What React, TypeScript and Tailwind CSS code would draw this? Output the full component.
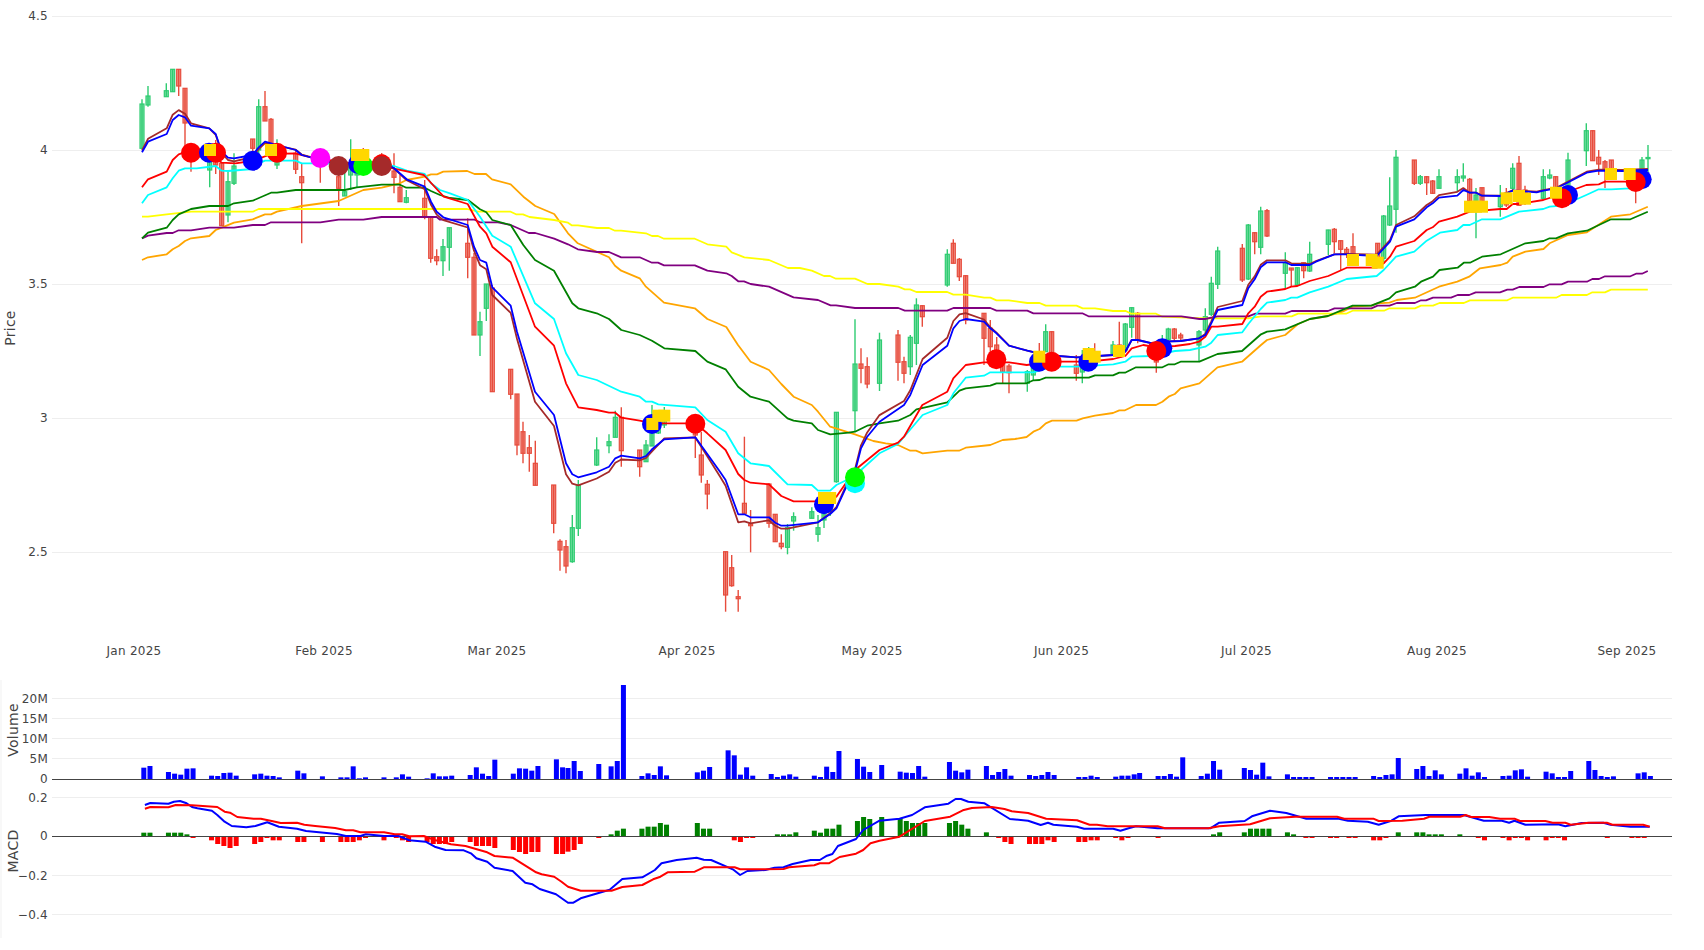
import React from 'react';

type Pt = [number, number];
// x, high, body top, body bottom, low, up(1)/down(0) - all in page pixels
type Candle = [number, number, number, number, number, number];
type Marker = [number, number, string];

const LEFT = 52;
const RIGHT = 1672;

const candles: Candle[] = [
  [142, 99.3, 104, 148.3, 149, 1], [148, 86, 96, 105, 106.7, 1], [166.3, 83.3, 90.7, 96.7, 96.7, 1], [172.7, 69, 69.3, 91.7, 92, 1],
  [178.7, 69, 69.3, 86, 96, 0], [185, 88, 88.3, 123, 150, 0], [191, 145, 150, 160, 171.7, 0], [209.7, 145, 150, 170, 187.3, 1],
  [215.7, 140, 150, 165, 174, 0], [221.7, 163, 163.3, 225.7, 226, 0], [228, 171.7, 181.7, 215, 222.3, 1], [234, 153.3, 166, 183.3, 185, 1],
  [252.7, 139, 139, 148.3, 160, 0], [258.7, 99.3, 106.7, 150, 155, 1], [265, 91, 106.7, 121, 121, 0], [271, 118, 119.3, 145, 150, 0],
  [277, 139.3, 150, 165, 169, 1], [295.7, 150, 153.3, 169.3, 174, 0], [301.7, 163, 176.7, 182.7, 243.3, 0], [320.3, 150, 150, 165, 182.7, 0],
  [338.7, 165, 176.7, 188.3, 206, 0], [344.7, 172, 191.7, 196, 196, 1], [350.7, 139.3, 166, 175, 190, 1], [357, 150, 160, 175, 187.3, 1],
  [363.3, 148, 150, 160, 165, 0], [381.7, 153, 155, 165, 170, 0], [394, 153.3, 171, 177.3, 193.3, 0], [400, 175, 187.3, 201.7, 201.7, 0],
  [406.3, 190, 197.7, 202.3, 203.3, 1], [424.7, 180, 198.3, 217.3, 219.3, 0], [430.7, 217, 217.3, 258.3, 262.7, 0], [436.7, 249.3, 256.7, 260.7, 265.3, 0],
  [443, 239, 246.7, 260.7, 276, 1], [449.3, 227.7, 227.7, 247.3, 270.7, 1], [467.7, 218.3, 243.3, 257.3, 278.3, 0], [474, 253, 257.3, 335, 335, 0],
  [480, 311.7, 321.7, 335, 356, 1], [486.3, 284, 284, 308.3, 321, 1], [492.3, 285, 288, 391.7, 392, 0], [510.7, 369, 369.3, 394.3, 399.3, 0],
  [517, 394, 394, 445, 455.3, 0], [523, 421.7, 431.7, 453.3, 463.3, 0], [529.3, 435, 447.7, 453.3, 471.7, 0], [535.3, 440.7, 463.3, 485.3, 485.3, 0],
  [553.7, 485, 485, 523.3, 533.3, 0], [560, 539.3, 541.3, 550, 570.7, 0], [566, 540, 546.7, 566, 573.3, 0], [572.3, 515, 527.7, 561.7, 562.7, 1],
  [578.3, 480, 485, 528.3, 536, 1], [596.7, 437.3, 450, 465, 466, 1], [609, 434.3, 441.7, 445.7, 453.3, 1], [615.3, 410.7, 417.3, 437.3, 437.3, 1],
  [621.3, 407.3, 417.3, 450.7, 466.7, 0], [639.7, 450, 450, 466.7, 476.7, 0], [646, 440, 445, 461.7, 461.7, 1], [652, 405, 430, 446, 446, 1],
  [658.3, 415, 423, 433, 434, 1], [664.3, 407, 420, 425, 428, 1], [695.3, 415, 420, 435, 458, 0], [701.3, 432, 455, 475, 482.7, 0],
  [707.3, 480, 484.3, 494, 509.3, 0], [725.6, 551.7, 551.7, 595, 611.7, 0], [731.7, 555, 567.7, 585.7, 586.7, 0], [738.2, 590, 596.7, 598.7, 611.7, 0],
  [744.4, 436.7, 503.3, 513.3, 514, 0], [750.6, 510, 524, 525.7, 552.3, 0], [769, 483, 484, 523.3, 527.7, 0], [775.2, 514, 514.3, 541.7, 542, 0],
  [781.3, 534.3, 543.3, 546.7, 549.3, 0], [787.5, 524, 527.7, 547.3, 554.3, 1], [793.6, 512.3, 516.7, 521, 530.7, 1], [811.8, 507.3, 511.7, 518.3, 518.3, 1],
  [818, 515, 527.7, 534.3, 541.7, 1], [824, 505, 510, 520, 528, 1], [830.2, 500, 505, 512, 516, 1], [836.4, 412, 412.3, 481.7, 482.7, 1],
  [855, 319.3, 364, 410.7, 431.7, 1], [861, 348.3, 364, 368.3, 383.3, 0], [867.2, 357.3, 366.7, 384, 388.3, 0], [879.5, 332.7, 340, 383.3, 391, 1],
  [898, 330, 335, 362.3, 380.7, 0], [904, 356.7, 361.7, 373.3, 383.3, 0], [910.3, 335, 337.3, 366.7, 375, 1], [916.4, 298.3, 305, 343.3, 365, 1],
  [922.3, 305, 305.7, 316.7, 326.7, 0], [947.3, 249.3, 254.3, 285, 286.7, 1], [953.3, 239.3, 243.3, 263.3, 263.3, 0], [959.3, 258, 259.3, 276.7, 281, 0],
  [965.7, 275, 275.7, 320, 324.3, 0], [984, 313, 313.3, 338.3, 365, 0], [990.3, 320, 328.3, 346.7, 357, 0], [996.7, 337, 345, 360, 368, 0],
  [1002.7, 355, 362, 372, 383, 0], [1009, 364, 366, 372.7, 393.3, 0], [1027.3, 370, 371.7, 383.3, 391.7, 1], [1033.3, 360, 365, 375, 380, 1],
  [1039.3, 343, 352, 362, 365, 0], [1045.7, 324.3, 331.7, 351.7, 352, 1], [1051.7, 331, 331.7, 355, 365, 0], [1076.3, 355, 365, 373.3, 380.7, 0],
  [1082.3, 350, 360, 372, 383.3, 1], [1088.7, 347, 352, 362, 366, 1], [1094.7, 343.3, 353, 358, 360, 0], [1113, 341, 345, 353.3, 355, 1],
  [1119.3, 321.7, 345, 356.7, 357, 0], [1125.3, 323, 324, 350, 351, 1], [1131.7, 307, 307.7, 327.3, 337.7, 1], [1137.7, 312, 313.3, 340, 343.3, 0],
  [1156.3, 342, 345, 362, 372.7, 0], [1162.3, 335, 340, 350, 355, 1], [1168.3, 327.7, 329, 339.3, 341, 1], [1174.3, 328, 329, 338.3, 341, 0],
  [1180.7, 332.7, 335, 338, 342, 0], [1199, 330, 331.7, 345, 361.7, 1], [1205.3, 308.3, 316.7, 330, 335, 1], [1211.3, 276.7, 283.3, 314.3, 316, 1],
  [1217.7, 246.7, 251, 284.3, 289, 1], [1242.3, 244, 248.3, 280, 282, 0], [1248.3, 224, 225, 279, 280, 1], [1254.7, 232, 232.7, 241.7, 254.3, 0],
  [1260.7, 206.7, 211, 247.3, 254.3, 1], [1267, 209, 210.7, 236, 237, 0], [1285.3, 252.3, 262.7, 273.3, 288.3, 1], [1291.3, 268, 268, 270, 287, 0],
  [1297.3, 267, 267.7, 285, 286, 1], [1303.7, 262, 262.7, 270.7, 278.3, 0], [1309.7, 241.7, 254.3, 271, 272, 1], [1328.3, 229.7, 230, 244.3, 255, 1],
  [1334.3, 228, 229.3, 241.7, 253.3, 0], [1340.7, 240, 240.7, 249.3, 270, 0], [1346.7, 247, 249.3, 253.3, 258, 0], [1353, 233.3, 246.7, 256.7, 262, 0],
  [1377.7, 243, 243.3, 262, 268, 0], [1383.7, 215, 216, 258.3, 262, 1], [1389.7, 177.3, 206, 225, 226, 1], [1396, 150, 157.3, 209.3, 232.7, 1],
  [1414.3, 160, 160, 183.3, 185, 0], [1420.3, 175, 176.7, 183.3, 185, 1], [1426.7, 176, 176.7, 182.7, 195, 0], [1432.7, 180, 181, 193.3, 194, 0],
  [1439, 169.3, 176.7, 188.3, 188.3, 1], [1457.3, 169.3, 176.7, 182.7, 192, 1], [1463.3, 163.3, 176, 178, 181.7, 1], [1469.7, 178, 179.3, 200.7, 203, 0],
  [1476, 188, 195, 205, 238.3, 1], [1482, 187.7, 187.7, 203, 205, 0], [1500.3, 185, 196.7, 206.7, 216.7, 1], [1506.3, 188, 193, 205, 207, 0],
  [1512.7, 163.3, 168.3, 188.3, 190, 1], [1519, 156, 163.3, 205.3, 206, 0], [1525, 185.7, 190, 200, 205, 0], [1543.3, 169.3, 176.7, 198.3, 199, 1],
  [1549.7, 169.3, 175, 178, 179.3, 1], [1555.7, 176, 176.7, 195, 197, 0], [1562, 188, 190, 200, 205, 0], [1568, 152.7, 160, 188, 190, 1],
  [1586.3, 123.3, 130.7, 150.7, 166, 1], [1592.7, 130, 130.7, 160.7, 161, 0], [1598.7, 150, 157.3, 164, 175, 0], [1605, 160, 161.7, 170, 188, 0],
  [1611.3, 160, 160, 170, 175, 0], [1635.7, 170, 175, 185, 203.3, 0], [1642, 157, 160, 172, 175, 1], [1648, 145, 157.5, 158.7, 172, 1],
];

const blue: Pt[] = [
  [142, 152.3], [148, 141.7], [166.7, 134], [172.7, 120], [178.7, 115], [185, 117.3], [191, 125.7], [209.3, 128.3], [215.7, 134], [221.7, 151.7], [228, 157.7], [234, 158.3],
  [252.7, 155], [258.7, 147.3], [265, 141.7], [271, 143.3], [277, 145], [295.7, 150], [301.7, 155], [320, 160], [338.7, 164], [356.7, 165], [363.3, 163.3], [381.7, 161.7],
  [394, 168.3], [406.7, 179.3], [424.7, 186.7], [431, 201.7], [436.7, 211.7], [443.3, 217.3], [467.7, 225], [474, 246.7], [480, 260], [486.3, 262.7], [492.3, 287.3],
  [510.7, 305.7], [517, 331.7], [535, 391.7], [554, 415], [566, 463.3], [572.3, 474.3], [578.3, 477.3], [596.7, 472.3], [609, 466.7], [615.3, 458.3], [621.3, 455.7],
  [639.7, 458.3], [646, 456], [652, 449.3], [664.3, 439.3], [695.3, 437.3], [707.3, 454], [720, 471.7], [725.6, 480], [738.2, 514.3], [744.4, 514.3], [750.5, 517.3],
  [769, 517.3], [775.2, 522.7], [781.3, 525.7], [787.5, 525.7], [818, 522.3], [830.2, 514], [836.4, 508.3], [848.7, 481.7], [855, 471.7], [861, 448.3], [867.2, 436.7],
  [879.5, 421.7], [904, 405], [910.3, 395], [922.6, 365], [947.3, 345.7], [953.4, 328.3], [959.5, 321], [965.7, 319], [984, 321.7], [990.3, 328.3], [996.5, 333.3],
  [1009, 345.7], [1027.3, 350.7], [1045.3, 355], [1076.7, 357.3], [1113.3, 355], [1125.3, 351.7], [1131.7, 340], [1137.7, 340], [1156.3, 344.3], [1162.3, 341.7],
  [1180.7, 341], [1199, 338.3], [1205.3, 335], [1211.3, 323.3], [1217.7, 310], [1242.3, 305], [1248.3, 288.3], [1254.7, 279.3], [1260.7, 267.3], [1267, 262.3],
  [1285.3, 262.3], [1291.3, 265], [1309.7, 265], [1316, 261.7], [1334.3, 254.3], [1346.7, 254.3], [1376.7, 256], [1390, 241.7], [1396, 226.7], [1414.3, 219.3],
  [1426.7, 207.3], [1432.7, 203.3], [1439, 197.7], [1457.3, 195.7], [1463.3, 190], [1469.7, 192.7], [1476, 192.7], [1482, 195.7], [1500.3, 196], [1512.7, 190.7],
  [1536.7, 192.3], [1543.3, 190.7], [1556.7, 188.3], [1586.7, 172.7], [1598.7, 170.7], [1623, 171], [1648, 170],
];

// the brown band follows the blue one, this is how far it sits below (+) or above (-)
const brownGap: Pt[] = [
  [142, -2], [166, -5.7], [178, -5], [191, -2.4], [209, 0], [234, 3], [300, -0.5], [394, 0], [431, 3], [467, 2.3], [474, 4], [492, 7.7], [517, 7], [535, 10], [554, 11],
  [566, 11], [578, 8], [609, 5], [639, 2], [652, 2], [664, -1], [695, 0], [738, 8], [769, 3], [787, 3], [818, 0], [848, -2], [861, -3], [879, -6.7], [904, -4], [922, -6],
  [947, -8], [965, -6], [990, -1], [1009, 0], [1199, 0], [1211, -2], [1217, -3], [1242, -4], [1254, -3], [1267, -2], [1285, -2], [1309, -1], [1334, 0], [1365, -1],
  [1396, -1.7], [1414, -3], [1432, -2], [1457, -4], [1469, 0], [1586, -1], [1648, -1],
];

const gapAt = (x: number) => {
  for (let i = 1; i < brownGap.length; i++) {
    const [x0, g0] = brownGap[i - 1];
    const [x1, g1] = brownGap[i];
    if (x <= x1) return g0 + ((g1 - g0) * (x - x0)) / (x1 - x0);
  }
  return 0;
};
const brown: Pt[] = blue.map(([x, y]) => [x, y + gapAt(x)]);

const red: Pt[] = [
  [142, 187.3], [148, 179.3], [166.7, 171.7], [172.7, 160], [178.7, 154.3], [191, 150], [209, 152], [221.7, 162.7], [235.4, 163.3], [252, 161], [271.7, 154], [295, 153.3],
  [308, 156.7], [340, 162], [393, 168.3], [423.8, 175], [443.7, 196.7], [467.7, 204], [480, 226.7], [486.3, 233.3], [492.3, 246.7], [510.7, 262.3], [535, 326.7],
  [554, 345.7], [566, 383.3], [578.3, 407.3], [596.7, 410], [609, 412.7], [615.3, 412.7], [621.3, 417.7], [639.7, 420.7], [652, 423.3], [695.3, 423.3], [707.3, 433.3],
  [725.6, 450], [738.2, 474], [744.4, 480], [750.5, 482.7], [769, 484.3], [781.3, 496], [793.6, 501.3], [818, 501.3], [824, 503], [836.4, 496.7], [855, 470],
  [879.5, 450], [898, 442.7], [904, 436.7], [922.3, 405], [947.3, 391.7], [953.3, 378.3], [965.7, 365], [984, 362.3], [1009, 362.3], [1026.7, 365], [1051.7, 361.7],
  [1088.3, 361.7], [1113.3, 359], [1125.3, 356], [1131.7, 348.3], [1143.3, 345], [1156.3, 347.3], [1175, 346], [1190, 344], [1199, 341.7], [1205.3, 336.7], [1211.3, 326.7],
  [1217.7, 326.7], [1242.3, 324], [1248.3, 313.3], [1254.7, 306.7], [1260.7, 296.7], [1267, 291.7], [1285.3, 289], [1291.3, 286.7], [1297.3, 286], [1309.7, 281],
  [1328.3, 276], [1346.7, 267.7], [1376.7, 267.7], [1383.7, 263.3], [1390, 256.7], [1396, 246.7], [1414.3, 241], [1426.7, 230], [1432.7, 227.3], [1439, 221.7],
  [1457.3, 216.7], [1469.7, 211.7], [1500.3, 209], [1506.7, 209], [1512.7, 204], [1519, 204], [1543.3, 200], [1562, 194], [1586.3, 185], [1598.7, 184.3], [1605, 181.7],
  [1636.7, 181.7], [1648, 179],
];

const cyan: Pt[] = [
  [142, 203.3], [148, 195], [166.7, 187.3], [172.7, 178.3], [178.7, 170.7], [185, 168.3], [196.7, 168.3], [215.7, 166], [221.7, 170.7], [228, 171], [252.7, 169], [258.7, 163.3],
  [265, 160.7], [295.7, 160.7], [301.7, 163.3], [320.3, 163.3], [394, 166], [406.7, 170.7], [424.7, 174], [431, 183.3], [440, 190], [450, 193.3], [467.7, 200], [480, 216.7],
  [492.3, 235.7], [510.7, 246.7], [535, 303.3], [554, 319], [566, 353.3], [578.3, 375], [596.7, 380], [621.3, 391.7], [639.7, 396.7], [646, 401.7], [652, 401.7],
  [658.3, 404.3], [695.3, 407.3], [707.3, 420], [725.6, 431.7], [738.2, 453.3], [750.5, 463.3], [769, 466], [787.5, 484.3], [811.8, 485], [818, 490.7], [830.2, 490.7],
  [836.4, 485], [848.7, 479], [861, 470], [879.5, 453.3], [898, 444], [922.6, 415], [947.3, 405], [953.4, 393.3], [965.7, 377.7], [984, 375.7], [990.3, 372.3],
  [1033.3, 372.3], [1051.7, 366.7], [1076.7, 366.7], [1113.3, 364.3], [1125.3, 361.7], [1131.7, 356.7], [1150, 356], [1175, 351], [1190, 350], [1205.3, 346.7],
  [1211.3, 342.7], [1217.7, 335], [1242.3, 332.3], [1248.3, 324], [1260.7, 309], [1267, 302.7], [1285.3, 300], [1291.3, 297.7], [1297.3, 297.7], [1309.7, 292.3],
  [1328.3, 286.7], [1346.7, 279], [1376.7, 276], [1383.7, 270], [1396, 256.7], [1414.3, 251.7], [1426.7, 240.7], [1440, 232.7], [1457.3, 230], [1463.3, 225],
  [1469.7, 225], [1482, 219.3], [1500.3, 219.3], [1519, 211.7], [1543.3, 209], [1549.7, 206.7], [1562, 205.7], [1586.3, 195], [1598.7, 189.3], [1611.3, 189.3],
  [1629.7, 188.3], [1648, 185],
];

const green: Pt[] = [
  [142, 238.3], [148, 232.7], [166.7, 227.7], [172.7, 220], [178.7, 214.3], [191, 209], [209.3, 206], [228, 206], [234, 203.3], [252.7, 200.7], [271, 192.7], [277, 192.7],
  [295.7, 190], [344.7, 190], [356.7, 187.3], [381.7, 184.7], [400, 184.7], [406.3, 187.7], [424.7, 187.7], [431, 191], [440, 195], [450, 198], [468, 200], [480, 209.3],
  [486.3, 212.3], [492.3, 220], [510.7, 225], [523.3, 245], [535, 260], [554, 270.7], [572.3, 303.3], [578.3, 308.3], [596.7, 313.3], [609, 319], [621.3, 330],
  [639.7, 335], [652, 340.7], [664.3, 348.3], [695.3, 351], [707.3, 361.7], [725.6, 369.3], [738.2, 386.7], [750.5, 396.7], [769, 401.7], [787.5, 418.3], [793.6, 420.7],
  [811.8, 423.3], [818, 430], [830.2, 434.3], [848.7, 432.7], [855, 431.7], [867.2, 425.7], [879.5, 423.3], [898, 420.7], [910.3, 415], [916.4, 409.3], [947.3, 402.3],
  [959.5, 390.7], [965.7, 388.3], [990.3, 385.7], [996.5, 383.3], [1026.6, 383.3], [1033.4, 380.3], [1039.6, 380], [1045.7, 377.7], [1088.8, 377.7], [1095, 375.3],
  [1113, 375.3], [1119.3, 372.7], [1125, 372.7], [1136, 367.3], [1162.4, 367.3], [1168.6, 364.3], [1174.8, 364.3], [1180.6, 361.7], [1199.4, 361.7], [1217.5, 354],
  [1242, 351], [1261, 334.3], [1267, 331.7], [1285.2, 329.3], [1309.9, 319], [1328, 316], [1352.6, 305.7], [1371.4, 305.7], [1389.5, 298.3], [1396, 292.3], [1414.9, 286.7],
  [1421, 281.7], [1433, 276.7], [1439.5, 270], [1457.6, 267.7], [1463.8, 262.7], [1470, 262.7], [1482, 256.7], [1500.7, 254.3], [1525.4, 243.3], [1543.5, 241],
  [1549.6, 238.3], [1556, 238.3], [1568, 233.3], [1586.9, 230.7], [1611, 219.3], [1630.4, 219.3], [1647.8, 211.7],
];

const orange: Pt[] = [
  [142, 260], [148, 257.3], [166.7, 254.3], [172.7, 249.3], [178.7, 246], [185, 241], [191, 238.3], [209.3, 236], [215.7, 230], [221.7, 227.7], [234, 222.7], [252.7, 219.3],
  [265, 214.3], [271, 214.3], [277, 211.7], [301.7, 206], [338.7, 201], [363.3, 190], [381.7, 187.7], [400, 183.3], [406.3, 180], [424.7, 176.7], [431, 174.3], [437, 174.3],
  [443.3, 171.7], [467.2, 171], [474.5, 174], [486, 174], [492, 179.3], [510.7, 184.3], [523.4, 196.7], [535.3, 206], [554.2, 214], [568, 233.3], [577.8, 243.3], [609, 257.3],
  [615, 265.7], [621.2, 270.7], [639.7, 278.3], [645.9, 286.7], [664, 302.7], [694.8, 308.3], [707.4, 319], [726.3, 327], [738, 345], [750.6, 361.7], [769, 370],
  [781.3, 384], [793.6, 396.7], [811.8, 405], [818, 411.7], [830.2, 426.7], [855, 434.3], [873.3, 441], [885.7, 443.3], [898, 445], [910.3, 450.7], [916, 450.7],
  [922.6, 453.3], [947.3, 450.7], [959, 450.7], [965.7, 447.7], [990.3, 445], [1002.7, 440], [1015, 439], [1026.6, 437], [1033.4, 431.7], [1039.6, 429], [1045.8, 423.3],
  [1052, 420.7], [1076.5, 420.7], [1082.7, 418.3], [1095, 415.7], [1113, 413], [1119.3, 410.3], [1125, 410.3], [1136, 405], [1156, 405], [1162.4, 401.7], [1168.6, 396.7],
  [1174.8, 394], [1180.6, 388.3], [1199.4, 383.3], [1217.5, 367.3], [1242, 361.7], [1261, 345], [1267, 340], [1285.2, 335], [1298, 324], [1310, 319], [1328, 316],
  [1342.4, 311.7], [1352.6, 306.7], [1371.4, 305.7], [1377.6, 303.3], [1389.5, 302.7], [1396.8, 300], [1414.9, 297.7], [1439, 286.7], [1457.3, 281.7], [1469.2, 276.7],
  [1480, 268.3], [1500.7, 265], [1507.3, 262.7], [1512.7, 256.7], [1525.4, 251.7], [1543.5, 249], [1549.6, 243.3], [1568, 235], [1586.9, 232.3], [1611, 216.7],
  [1630.4, 214.3], [1647.8, 206.7],
];

const yellow: Pt[] = [
  [142, 216.7], [148, 216.7], [166.7, 214.3], [191, 211.7], [252.7, 211.7], [258.7, 209], [467.2, 209], [478, 211.7], [510.7, 211.7], [516, 214.3], [523, 214.3], [529.5, 217],
  [554.2, 220], [568, 222.7], [571.6, 225.3], [578, 225.3], [597, 228], [609, 228], [615, 230.7], [621, 230.7], [645.9, 233.3], [652, 236], [658, 236], [664, 238.7],
  [694.8, 238.7], [707.4, 244.3], [726.3, 246.7], [731.7, 252.3], [744.4, 257.3], [769, 260], [787.9, 268], [799.8, 268], [811.8, 270.7], [824, 276], [830, 276],
  [836, 278.7], [855, 278.7], [867.5, 284], [879.5, 284], [898.3, 286.7], [904.8, 289.3], [910, 289.3], [916.4, 292], [947.2, 292], [953.4, 294.7], [965.7, 294.7],
  [984.2, 297.7], [990.3, 297.7], [996.5, 300.3], [1008.8, 300.3], [1027.3, 303], [1039.6, 303], [1045.8, 305.7], [1076.5, 305.7], [1082.7, 308.3], [1095, 308.3],
  [1113, 311], [1125.8, 311], [1131.2, 313.7], [1156, 313.7], [1162.4, 316.7], [1205, 318.3], [1248.3, 318.3], [1261, 316.3], [1291.7, 316.3], [1298, 313.7], [1346, 313.7],
  [1352.6, 310.7], [1384, 310.7], [1389.5, 308.3], [1414.9, 308.3], [1421, 305.7], [1433, 305.7], [1439.5, 303], [1463.8, 303], [1470, 300.3], [1507.3, 300.3],
  [1512.7, 297.7], [1556, 297.7], [1561.6, 295], [1586.9, 295], [1592.4, 292.3], [1605, 292.3], [1611, 289.7], [1647.8, 289.7],
];

const purple: Pt[] = [
  [142, 238.3], [148, 235.7], [166.7, 233], [172.7, 233], [178.7, 230.3], [191, 230.3], [209.3, 227.7], [234, 227.7], [252.7, 225], [265, 225], [271, 222.3], [320.3, 222.3],
  [338.7, 219.7], [363.3, 219.7], [381.7, 217], [436.7, 217], [440, 219.7], [474.5, 219.7], [480, 222.3], [498, 222.3], [510.7, 225], [528.8, 233], [535.3, 233],
  [554.2, 238.7], [568, 244.3], [577.8, 249.3], [597, 252], [609, 252], [621.2, 257.3], [639.7, 257.3], [652, 262.7], [658, 262.7], [664, 265.3], [694.8, 265.3],
  [707.4, 270.7], [726.3, 273.3], [731.7, 276], [738.2, 281.3], [744, 281.3], [750.6, 284], [769, 286.7], [793.6, 297.3], [818, 300], [830.6, 305.3], [836, 305.3],
  [855, 308], [898.3, 308], [904.8, 310.7], [947.2, 310.7], [953.4, 308], [990.3, 308], [996.5, 310.7], [1027.3, 310.7], [1033.4, 313.3], [1082.3, 313.3], [1088.5, 316.3],
  [1181.3, 316.3], [1199.4, 319], [1205, 319], [1217.5, 316.3], [1248.3, 316.3], [1255.5, 313.7], [1285.2, 313.7], [1291.7, 311], [1328, 311], [1334.5, 308.3],
  [1371.4, 308.3], [1377.6, 305.7], [1389.5, 305.7], [1396.8, 303], [1414.9, 303], [1421, 300.3], [1426, 300.3], [1433, 297.7], [1451, 297.7], [1457.6, 295], [1469.2, 295],
  [1475.7, 292.3], [1500, 292.3], [1507.3, 289.7], [1512.7, 289.7], [1519.2, 287], [1543.5, 287], [1549.6, 284.3], [1561.6, 284.3], [1568, 281.7], [1586.9, 281.7],
  [1592.4, 279], [1599, 279], [1605, 276.3], [1630.4, 276.3], [1636, 273.7], [1642, 273.7], [1647.8, 271],
];

const bands: [Pt[], string][] = [
  [orange, '#ffa500'], [yellow, '#ffff00'], [purple, '#800080'], [green, '#008000'], [cyan, '#00ffff'], [red, '#ff0000'], [brown, '#a52a2a'], [blue, '#0000ff'],
];

const circles: Marker[] = [
  [191, 152.7, '#ff0000'], [209, 152.7, '#0000ff'], [216, 152.7, '#ff0000'], [252.7, 160.7, '#0000ff'], [277, 152.7, '#ff0000'], [320.3, 158, '#ff00ff'],
  [358, 164, '#0000ff'], [363.3, 166, '#00ff00'], [338.7, 166, '#a52a2a'], [381.7, 164.3, '#ff0000'], [381.7, 166, '#a52a2a'], [652, 424, '#0000ff'], [695.3, 423.7, '#ff0000'],
  [824, 504.3, '#0000ff'], [855, 483.3, '#00ffff'], [855, 477.3, '#00ff00'], [996.3, 359.3, '#ff0000'], [1039, 361.7, '#0000ff'], [1051.7, 361.7, '#ff0000'],
  [1088.3, 361.7, '#0000ff'], [1162.3, 348.3, '#0000ff'], [1156.3, 351, '#ff0000'], [1568, 195, '#0000ff'], [1562, 198.3, '#ff0000'], [1641.7, 179.3, '#0000ff'], [1635.7, 182, '#ff0000'],
];

const squares: Pt[] = [
  [210, 150], [271, 150], [357, 155], [363.3, 155], [652.3, 424], [658.3, 415.7], [664.3, 415.7], [824, 498], [830.2, 498], [1039.3, 356.7], [1088.7, 354], [1094.7, 356.7],
  [1119, 351], [1353, 260], [1371.7, 260], [1377.7, 262.7], [1470, 206.7], [1476, 206.7], [1482, 206.7], [1506.7, 198.3], [1519, 196], [1525, 198.7], [1556, 192.7],
  [1611, 174], [1629.7, 174],
];

// lower panels share x positions, grouped per stretch of the chart: [start, [slot, value]...]
const SCALE = 568 / 1568;
const stretch = (start: number, rows: Pt[]): Pt[] => rows.map(([x, v]) => [start + x * SCALE, v]);

const volume: Pt[] = [
  ...stretch(0, [
    [397, 263], [414, 258], [465, 276], [482, 281], [499, 284], [516, 266], [533, 265], [584, 287], [601, 288], [618, 279], [635, 278], [652, 287], [703, 283], [720, 281], [737, 287],
    [754, 288], [771, 292], [822, 272], [839, 280], [890, 289], [941, 292], [958, 292], [975, 259], [992, 295], [1009, 292], [1060, 292], [1094, 292], [1111, 283], [1128, 290],
    [1179, 295], [1196, 280], [1213, 289], [1230, 289], [1247, 287], [1298, 285], [1315, 262], [1332, 281], [1349, 288], [1366, 239], [1417, 281], [1434, 265], [1451, 266],
    [1468, 272], [1485, 258], [1536, 238], [1553, 262],
  ]),
  ...stretch(568, [
    [0, 264], [17, 243], [34, 273], [85, 252], [119, 259], [136, 243], [153, 15], [204, 288], [221, 280], [238, 285], [255, 259], [272, 286], [357, 277], [374, 272], [391, 261],
    [442, 211], [459, 226], [476, 284], [493, 262], [510, 287], [561, 282], [578, 291], [595, 287], [612, 283], [629, 290], [680, 287], [697, 291], [714, 260], [731, 276], [748, 213],
    [799, 237], [816, 260], [833, 276], [866, 255], [917, 275], [934, 278], [951, 279], [968, 258], [985, 290], [1053, 246], [1070, 272], [1087, 277], [1104, 269], [1155, 258],
    [1172, 285], [1189, 276], [1206, 267], [1223, 287], [1274, 285], [1291, 288], [1308, 285], [1325, 276], [1342, 285], [1410, 291], [1427, 291], [1444, 287], [1461, 291],
    [1512, 290], [1529, 287], [1546, 287], [1563, 283],
  ]),
  ...stretch(1136, [
    [10, 279], [61, 288], [78, 288], [95, 282], [112, 290], [129, 232], [180, 288], [197, 281], [214, 243], [231, 269], [299, 264], [316, 270], [333, 284], [350, 248], [367, 289],
    [418, 283], [435, 291], [452, 291], [469, 291], [486, 291], [537, 291], [554, 291], [571, 291], [588, 291], [605, 291], [656, 288], [673, 291], [690, 285], [707, 283], [724, 234],
    [775, 267], [792, 258], [809, 288], [826, 271], [843, 283], [894, 281], [911, 265], [928, 287], [945, 277], [962, 291], [1013, 288], [1030, 287], [1047, 271], [1064, 268],
    [1081, 290], [1132, 275], [1149, 280], [1166, 291], [1183, 291], [1200, 273], [1250, 243], [1267, 270], [1284, 288], [1301, 291], [1318, 289], [1386, 280], [1403, 277], [1420, 288],
  ]),
];

const histogram: Pt[] = [
  ...stretch(0, [
    [397, 458], [414, 458], [465, 458], [482, 458], [499, 458], [516, 463], [533, 474], [584, 481], [601, 492], [618, 498], [635, 504], [652, 498], [703, 492], [720, 486], [737, 474],
    [754, 481], [771, 481], [822, 486], [839, 486], [890, 486], [941, 486], [958, 486], [975, 486], [992, 481], [1009, 474], [1060, 481], [1094, 474], [1111, 481], [1128, 486],
    [1179, 486], [1196, 492], [1213, 492], [1230, 492], [1247, 486], [1298, 486], [1315, 498], [1332, 498], [1349, 498], [1366, 504], [1417, 510], [1434, 516], [1451, 522],
    [1468, 516], [1485, 516], [1536, 522], [1553, 522],
  ]),
  ...stretch(568, [
    [0, 515], [17, 510], [34, 492], [85, 474], [119, 463], [136, 452], [153, 446], [204, 446], [221, 440], [238, 440], [255, 429], [272, 434], [357, 429], [374, 446], [391, 446],
    [459, 481], [476, 486], [493, 474], [510, 474], [578, 463], [595, 463], [612, 463], [629, 457], [680, 452], [697, 458], [714, 446], [731, 446], [748, 434], [799, 423], [816, 411],
    [833, 417], [866, 411], [917, 417], [934, 423], [951, 429], [968, 429], [985, 429], [1053, 429], [1070, 423], [1087, 434], [1104, 446], [1155, 457], [1189, 474], [1206, 486],
    [1223, 492], [1274, 492], [1291, 492], [1308, 492], [1325, 481], [1342, 486], [1410, 486], [1427, 486], [1444, 481], [1461, 481], [1512, 474], [1529, 481], [1546, 474],
  ]),
  ...stretch(1136, [
    [61, 474], [214, 463], [231, 457], [299, 457], [316, 446], [333, 446], [350, 446], [367, 446], [418, 457], [435, 463], [469, 474], [486, 474], [537, 474], [554, 474], [588, 474],
    [605, 474], [656, 481], [673, 481], [690, 474], [724, 457], [775, 457], [792, 457], [809, 463], [826, 463], [843, 463], [894, 463], [945, 474], [962, 481], [1013, 474], [1030, 481],
    [1047, 474], [1064, 474], [1081, 481], [1132, 481], [1149, 474], [1166, 474], [1183, 481], [1301, 474], [1369, 474], [1386, 474], [1403, 474],
  ]),
];

const macd: Pt[] = [
  ...stretch(0, [
    [400, 375], [415, 369], [465, 371], [480, 365], [497, 363], [515, 370], [530, 381], [545, 385], [585, 392], [600, 405], [620, 425], [640, 438], [680, 442], [705, 438], [738, 427],
    [770, 440], [820, 446], [845, 453], [930, 462], [955, 468], [995, 468], [1010, 463], [1060, 468], [1100, 468], [1130, 481], [1175, 485], [1200, 500], [1230, 510], [1280, 511],
    [1300, 520], [1315, 535], [1345, 545], [1365, 563], [1415, 573], [1450, 608], [1470, 613], [1490, 627], [1535, 643],
  ]),
  ...stretch(568, [
    [0, 668], [15, 668], [35, 655], [115, 629], [150, 597], [205, 592], [240, 570], [258, 550], [300, 540], [355, 533], [375, 539], [395, 540], [455, 568], [475, 585], [495, 573],
    [545, 570], [570, 563], [595, 562], [620, 552], [670, 540], [695, 540], [715, 527], [730, 522], [745, 498], [795, 477], [815, 450], [860, 422], [915, 416], [950, 405], [985, 382],
    [1050, 371], [1070, 357], [1085, 357], [1105, 365], [1150, 370], [1220, 417], [1270, 422], [1305, 435], [1325, 428], [1340, 434], [1405, 440], [1425, 446], [1505, 446], [1525, 452],
    [1550, 444],
  ]),
  ...stretch(1136, [
    [0, 439], [60, 445], [205, 445], [230, 428], [300, 423], [320, 409], [370, 392], [415, 399], [470, 416], [560, 416], [585, 422], [640, 425], [670, 434], [705, 422], [725, 409],
    [800, 405], [905, 405], [960, 422], [1010, 422], [1030, 428], [1045, 422], [1075, 434], [1165, 433], [1185, 439], [1230, 429], [1290, 428], [1310, 434], [1365, 440], [1418, 440],
  ]),
];

const signal: Pt[] = [
  ...stretch(0, [
    [400, 386], [415, 381], [465, 382], [485, 375], [530, 376], [600, 381], [620, 395], [635, 398], [655, 411], [700, 416], [720, 416], [750, 423], [775, 429], [820, 428], [840, 434],
    [870, 438], [925, 444], [955, 451], [975, 451], [995, 457], [1060, 457], [1090, 463], [1110, 463], [1130, 469], [1170, 468], [1200, 480], [1245, 493], [1285, 498], [1345, 517],
    [1365, 528], [1415, 533], [1480, 577], [1495, 583], [1530, 590], [1550, 605],
  ]),
  ...stretch(568, [
    [0, 620], [35, 632], [120, 632], [150, 621], [205, 615], [235, 598], [255, 590], [275, 577], [350, 575], [375, 562], [460, 562], [475, 568], [595, 567], [610, 562], [680, 556],
    [695, 550], [720, 550], [750, 531], [795, 521], [815, 510], [835, 490], [860, 482], [915, 470], [985, 423], [1055, 410], [1090, 391], [1115, 384], [1170, 381], [1205, 387],
    [1225, 394], [1270, 399], [1320, 416], [1405, 421], [1440, 434], [1460, 434], [1490, 439],
  ]),
  ...stretch(1136, [
    [0, 439], [60, 439], [80, 445], [200, 445], [230, 439], [315, 433], [370, 415], [440, 410], [555, 410], [575, 416], [655, 416], [670, 423], [735, 422], [795, 416], [810, 410],
    [895, 410], [910, 405], [925, 411], [975, 411], [1005, 416], [1045, 416], [1060, 423], [1130, 423], [1150, 428], [1185, 428], [1200, 434], [1250, 428], [1300, 428], [1315, 434],
    [1400, 434], [1418, 440],
  ]),
];

const toLower = (rows: Pt[]): string => rows.map(([x, v]) => `${x.toFixed(1)},${(680 + v / 3).toFixed(1)}`).join(' ');
const toLine = (rows: Pt[]): string => rows.map(([x, y]) => `${x},${y.toFixed(1)}`).join(' ');

const priceTicks: [string, number][] = [['4.5', 16], ['4', 150], ['3.5', 284], ['3', 418], ['2.5', 552]];
const months: [string, number][] = [
  ['Jan 2025', 134], ['Feb 2025', 324], ['Mar 2025', 497], ['Apr 2025', 687], ['May 2025', 872], ['Jun 2025', 1061.5], ['Jul 2025', 1246.5], ['Aug 2025', 1437], ['Sep 2025', 1627],
];
const volumeTicks: [string, number][] = [['20M', 698.5], ['15M', 718.5], ['10M', 738.5], ['5M', 758.5]];
const macdTicks: [string, number][] = [['0.2', 797.5], ['−0.2', 875.5], ['−0.4', 914.5]];

const Tick: React.FC<{ label: string; y: number }> = ({ label, y }) => (
  <text x={48} y={y + 4.3} textAnchor="end" fontSize={12} fill="#444">
    {label}
  </text>
);

const GridLine: React.FC<{ y: number }> = ({ y }) => <line x1={LEFT} x2={RIGHT} y1={y} y2={y} stroke="#eee" strokeWidth={1} />;

const AxisTitle: React.FC<{ label: string; x: number; y: number }> = ({ label, x, y }) => (
  <text transform={`translate(${x} ${y}) rotate(-90)`} textAnchor="middle" fontSize={14} fill="#444">
    {label}
  </text>
);

const PricePanel: React.FC = () => (
  <svg viewBox="0 0 1704 680" className="block w-[1704px] h-[680px]">
    {priceTicks.map(([label, y]) => (
      <g key={label}>
        <GridLine y={y + 0.5} />
        <Tick label={label} y={y} />
      </g>
    ))}
    <AxisTitle label="Price" x={15} y={328} />
    {months.map(([label, x]) => (
      <text key={label} x={x} y={655} textAnchor="middle" fontSize={12} fill="#444">
        {label}
      </text>
    ))}
    {candles.map(([x, high, top, bottom, low, up]) => {
      const color = up ? '#2ecc71' : '#e74c3c';
      return (
        <g key={x} stroke={color}>
          <line x1={x} x2={x} y1={high} y2={low} strokeWidth={1.4} />
          <rect x={x - 2} y={top} width={4} height={Math.max(bottom - top, 1)} fill={color} fillOpacity={0.6} strokeWidth={1.2} />
        </g>
      );
    })}
    {bands.map(([rows, color]) => (
      <polyline key={color} points={toLine(rows)} fill="none" stroke={color} strokeWidth={1.8} strokeLinejoin="round" />
    ))}
    {circles.map(([x, y, color], i) => (
      <circle key={i} cx={x} cy={y} r={10} fill={color} />
    ))}
    {squares.map(([x, y], i) => (
      <rect key={i} x={x - 6} y={y - 6} width={12} height={12} fill="#ffd700" />
    ))}
  </svg>
);

const VolumePanel: React.FC = () => (
  <svg viewBox="0 680 1704 105" className="block w-[1704px] h-[105px]">
    <rect x={0} y={680} width={2} height={105} fill="#f8f8f8" />
    {volumeTicks.map(([label, y]) => (
      <g key={label}>
        <GridLine y={y} />
        <Tick label={label} y={y} />
      </g>
    ))}
    <Tick label="0" y={779} />
    <AxisTitle label="Volume" x={18} y={730} />
    {volume.map(([x, top]) => (
      <rect key={x} x={x - 2.5} y={680 + top / 3} width={5} height={99.3 - top / 3} fill="#0000ff" />
    ))}
    <line x1={LEFT} x2={RIGHT} y1={779.5} y2={779.5} stroke="#444" strokeWidth={1} />
  </svg>
);

const MacdPanel: React.FC = () => (
  <svg viewBox="0 785 1704 165" className="block w-[1704px] h-[165px]">
    <rect x={0} y={785} width={2} height={153} fill="#f8f8f8" />
    {macdTicks.map(([label, y]) => (
      <g key={label}>
        <GridLine y={y} />
        <Tick label={label} y={y} />
      </g>
    ))}
    <Tick label="0" y={836} />
    <AxisTitle label="MACD" x={18} y={851} />
    {histogram.map(([x, end]) => {
      const y = 680 + end / 3;
      return (
        <rect key={x} x={x - 2.5} y={Math.min(y, 836.3)} width={5} height={Math.abs(y - 836.3)} fill={end < 469 ? '#008000' : '#ff0000'} />
      );
    })}
    <line x1={LEFT} x2={RIGHT} y1={836.5} y2={836.5} stroke="#444" strokeWidth={1} />
    <polyline points={toLower(macd)} fill="none" stroke="#0000ff" strokeWidth={2} strokeLinejoin="round" />
    <polyline points={toLower(signal)} fill="none" stroke="#ff0000" strokeWidth={2} strokeLinejoin="round" />
  </svg>
);

export default function App() {
  return (
    <div className="flex flex-col w-[1704px] h-[950px] bg-white overflow-hidden [font-family:'DejaVu_Sans',Verdana,sans-serif] tracking-[0.25px]">
      <PricePanel />
      <VolumePanel />
      <MacdPanel />
    </div>
  );
}
